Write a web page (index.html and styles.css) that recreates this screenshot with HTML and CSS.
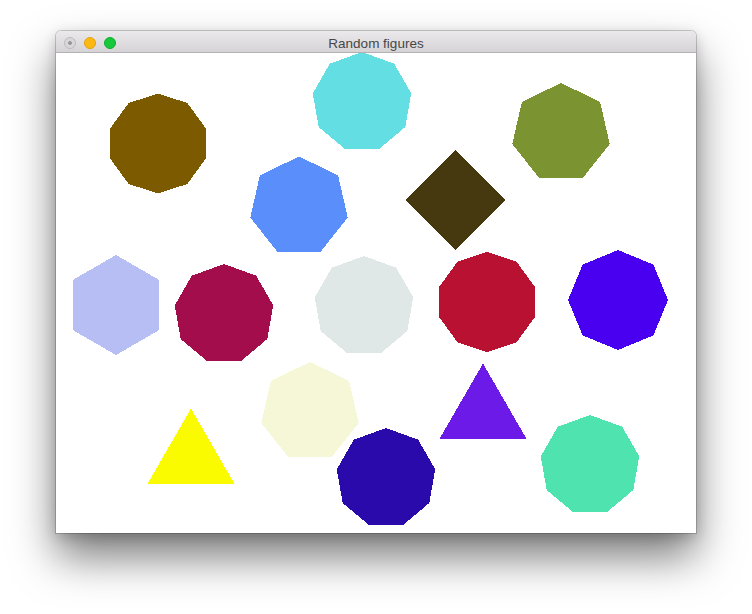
FILE: index.html
```html
<!DOCTYPE html>
<html>
<head>
<meta charset="utf-8">
<title>Random figures</title>
<link rel="stylesheet" href="styles.css">
</head>
<body>
<div class="window">
  <div class="titlebar">
    <div class="lights">
      <span class="light close"></span>
      <span class="light mini"></span>
      <span class="light zoom"></span>
    </div>
    <div class="title">Random figures</div>
    <div></div>
  </div>
  <div class="content">
    <svg class="canvas" width="640" height="480" viewBox="0 0 640 480" shape-rendering="crispEdges">
      <defs>
        <polygon id="n3" points="0,-50 43.3,25 -43.3,25"/>
        <polygon id="n4" points="0,-50 50,0 0,50 -50,0"/>
        <polygon id="n6" points="0,-50 43.3,-25 43.3,25 0,50 -43.3,25 -43.3,-25"/>
        <polygon id="n7" points="0,-50 39.09,-31.17 48.75,11.13 21.69,45.05 -21.69,45.05 -48.75,11.13 -39.09,-31.17"/>
        <polygon id="n8" points="0,-50 35.36,-35.36 50,0 35.36,35.36 0,50 -35.36,35.36 -50,0 -35.36,-35.36"/>
        <polygon id="n9" points="0,-50 32.14,-38.3 49.24,-8.68 43.3,25 17.1,46.98 -17.1,46.98 -43.3,25 -49.24,-8.68 -32.14,-38.3"/>
        <polygon id="n10" points="0,-50 29.39,-40.45 47.55,-15.45 47.55,15.45 29.39,40.45 0,50 -29.39,40.45 -47.55,15.45 -47.55,-15.45 -29.39,-40.45"/>
      </defs>
      <use href="#n10" x="102" y="90.5" fill="#7c5a00"/>
      <use href="#n9" x="306" y="49" fill="#63dfe3"/>
      <use href="#n7" x="505" y="80" fill="#7b9330"/>
      <use href="#n7" x="243" y="153.5" fill="#5a8ffb"/>
      <use href="#n4" x="399.5" y="147" fill="#47390f"/>
      <use href="#n6" x="60" y="252" fill="#b6bef3"/>
      <use href="#n9" x="168" y="261" fill="#a30d4c"/>
      <use href="#n9" x="308" y="253" fill="#dfe8e6"/>
      <use href="#n10" x="431" y="249" fill="#b81131"/>
      <use href="#n8" x="562" y="247" fill="#4a00f0"/>
      <use href="#n7" x="254" y="359" fill="#f6f7d6"/>
      <use href="#n3" x="135" y="405.5" fill="#fbfb00"/>
      <use href="#n3" x="427" y="360.5" fill="#6b1ae8"/>
      <use href="#n9" x="330" y="425" fill="#2b0aab"/>
      <use href="#n9" x="534" y="412" fill="#4fe3b0"/>
    </svg>
  </div>
</div>
</body>
</html>
```

FILE: styles.css
```css
html, body {
  margin: 0;
  padding: 0;
  background: #ffffff;
}

body {
  font-family: "Liberation Sans", Arial, sans-serif;
  width: 752px;
  height: 614px;
  overflow: hidden;
}

.window {
  width: 640px;
  margin: 31px 0 0 56px;
  border-radius: 5px 5px 0 0;
  background: #ffffff;
  box-shadow: 0 0 0 1px rgba(0, 0, 0, 0.18), 0 24px 44px rgba(0, 0, 0, 0.52), 0 4px 14px rgba(0, 0, 0, 0.18);
}

.titlebar {
  height: 22px;
  box-sizing: border-box;
  border-bottom: 1px solid #b3b1b3;
  border-radius: 5px 5px 0 0;
  background: linear-gradient(#ebe9eb, #d5d3d5);
  display: grid;
  grid-template-columns: 1fr auto 1fr;
  align-items: center;
}

.lights {
  display: flex;
  gap: 8px;
  padding-left: 8px;
  align-items: center;
}

.light {
  width: 12px;
  height: 12px;
  border-radius: 50%;
  box-sizing: border-box;
  display: block;
}

.close {
  background: radial-gradient(circle, #9a9a9a 0 1.6px, #d9d7d9 2.2px);
  border: 1px solid #bdbbbd;
}

.mini {
  background: #fdb913;
  border: 1px solid #e2a20c;
}

.zoom {
  background: #17c93a;
  border: 1px solid #0fae2c;
}

.title {
  font-size: 13.5px;
  color: #474747;
  line-height: 21px;
  padding-top: 2px;
}

.content {
  height: 480px;
  overflow: hidden;
}

.canvas {
  display: block;
}
```
